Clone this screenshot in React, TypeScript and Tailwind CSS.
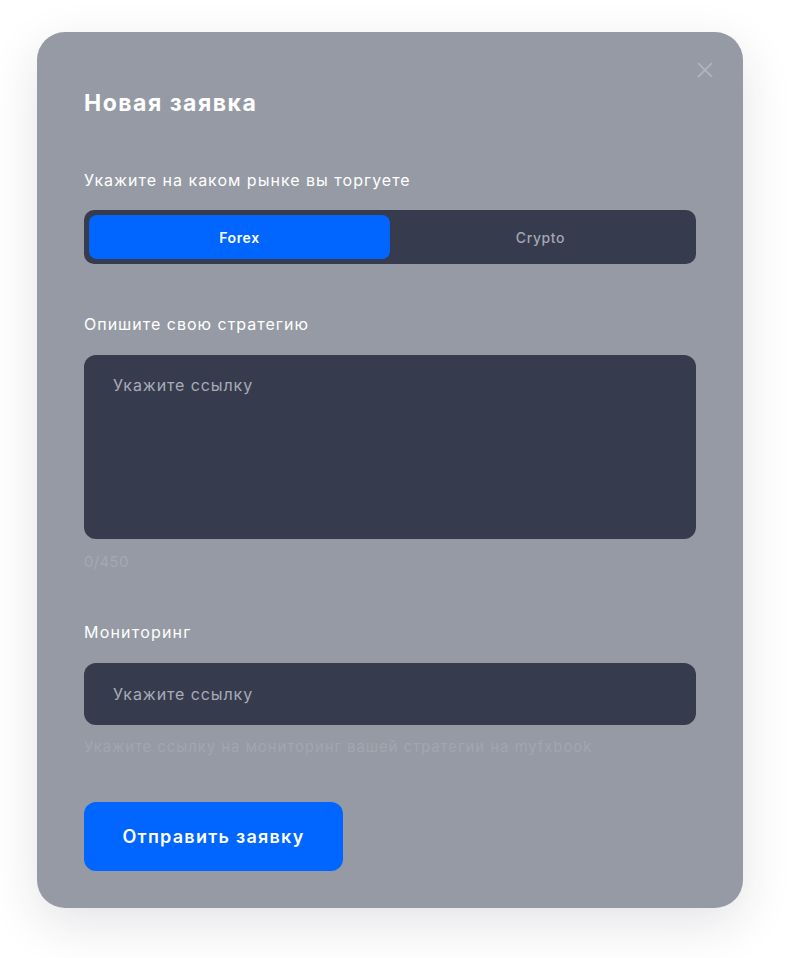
import React from "react";

export default function App() {
  const font = { fontFamily: "Inter, 'Open Sans', sans-serif" };
  return (
    <div className="min-h-[958px] w-[788px] bg-white pt-[32px] pl-[37px]" style={font}>
      <div className="relative w-[706px] h-[876px] rounded-[28px] bg-[#969aa4] shadow-[0_16px_50px_rgba(30,30,60,0.12)] px-[47px] pt-[57px] flex flex-col">
        <button className="absolute right-[29px] top-[29px] w-[18px] h-[18px] text-[#aeb1ba]">
          <svg viewBox="0 0 18 18" width="18" height="18" fill="none" stroke="currentColor" strokeWidth="2">
            <path d="M2 2 L16 16 M16 2 L2 16" />
          </svg>
        </button>
        <h1 className="text-[23px] leading-[28px] font-bold tracking-[1.5px] text-white">Новая заявка</h1>
        <div className="mt-[51px] text-[16px] leading-[24px] tracking-[1px] text-white">Укажите на каком рынке вы торгуете</div>
        <div className="mt-[18px] h-[54px] rounded-[10px] bg-[#363b4e] p-[5px] flex">
          <div className="w-[301px] rounded-[8px] bg-[#0066ff] flex items-center justify-center text-[14px] font-semibold tracking-[0.6px] text-white">Forex</div>
          <div className="flex-1 flex items-center justify-center text-[14px] font-medium tracking-[0.6px] text-[#a3a7b3]">Crypto</div>
        </div>
        <div className="mt-[48px] text-[16px] leading-[24px] tracking-[1px] text-white">Опишите свою стратегию</div>
        <div className="mt-[19px] h-[184px] rounded-[12px] bg-[#363b4e] pl-[29px] pt-[18px] text-[16px] leading-[24px] tracking-[0.9px] text-[#a8abb6]">Укажите ссылку</div>
        <div className="mt-[13px] text-[15px] leading-[20px] tracking-[0.3px] text-[#a5a9b2]">0/450</div>
        <div className="mt-[48px] text-[16px] leading-[24px] tracking-[1.2px] text-white">Мониторинг</div>
        <div className="mt-[19px] h-[62px] rounded-[12px] bg-[#363b4e] pl-[29px] flex items-center text-[16px] tracking-[0.9px] text-[#a8abb6]">Укажите ссылку</div>
        <div className="mt-[12px] text-[15px] leading-[20px] tracking-[0.9px] text-[#a2a6af]">Укажите ссылку на мониторинг вашей стратегии на myfxbook</div>
        <button className="mt-[45px] w-[259px] h-[69px] rounded-[12px] bg-[#0066ff] text-white text-[18px] font-semibold tracking-[1.25px]">Отправить заявку</button>
      </div>
    </div>
  );
}
